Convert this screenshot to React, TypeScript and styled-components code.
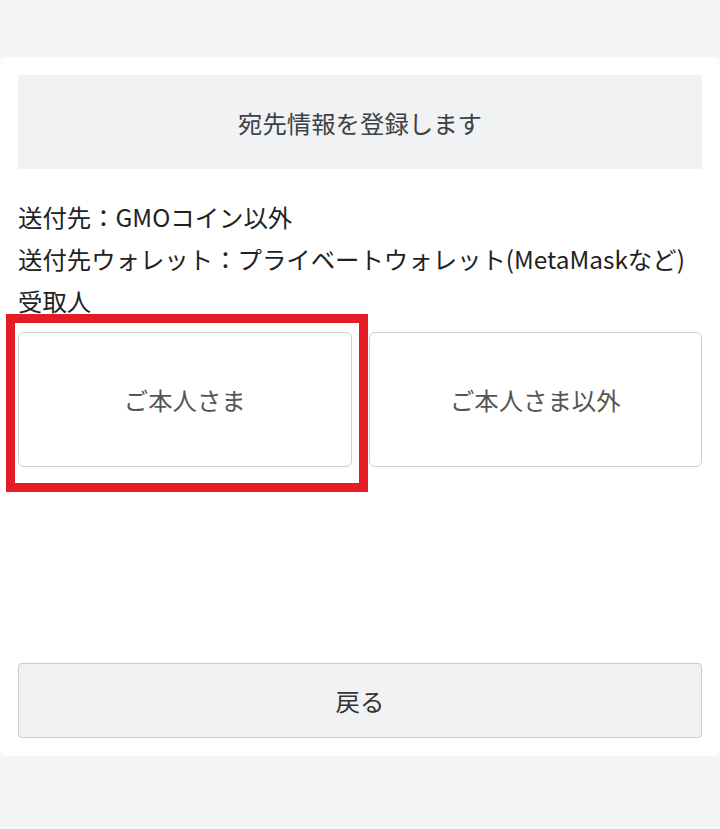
import styled, { createGlobalStyle } from 'styled-components';

const GlobalStyle = createGlobalStyle`
  html, body {
    margin: 0;
    padding: 0;
    background: #f5f5f5;
  }
  body {
    font-family: 'Noto Sans CJK JP', 'Noto Sans', sans-serif;
    color: #222;
  }
`;

const Page = styled.div`
  padding-top: 57px;
  min-height: 829px;
  box-sizing: border-box;
`;

const Card = styled.div`
  background: #ffffff;
  border-radius: 6px;
  padding: 18px 18px 18px;
  display: flex;
  flex-direction: column;
`;

const Header = styled.div`
  height: 94px;
  background: #f1f2f3;
  display: flex;
  align-items: center;
  justify-content: center;
  font-size: 24.4px;
  color: #3c4146;
`;

const InfoList = styled.div`
  margin-top: 27px;
  font-size: 24.4px;
  line-height: 42px;
  color: #222;
`;

const InfoLine = styled.div`
  white-space: nowrap;
`;

const ChoiceRow = styled.div`
  margin-top: 10px;
  display: grid;
  grid-template-columns: 1fr 1fr;
  gap: 17px;
`;

const ChoiceCell = styled.div`
  position: relative;
`;

const ChoiceButton = styled.button`
  width: 100%;
  height: 135px;
  background: #ffffff;
  border: 1px solid #cfcfcf;
  border-radius: 6px;
  font-family: inherit;
  font-size: 24.4px;
  color: #555;
  cursor: pointer;
  display: flex;
  align-items: center;
  justify-content: center;
`;

const Highlight = styled.div`
  position: absolute;
  left: -12px;
  top: -18px;
  width: 362px;
  height: 178px;
  box-sizing: border-box;
  border: 9px solid #e31c25;
  pointer-events: none;
`;

const BackButton = styled.button`
  margin-top: 196px;
  height: 75px;
  background: #f2f2f2;
  border: 1px solid #cccccc;
  border-radius: 4px;
  font-family: inherit;
  font-size: 24.4px;
  color: #333;
  cursor: pointer;
`;

const choices = ['ご本人さま', 'ご本人さま以外'];

export default function App() {
  return (
    <Page>
      <GlobalStyle />
      <Card>
        <Header>宛先情報を登録します</Header>
        <InfoList>
          <InfoLine>送付先：GMOコイン以外</InfoLine>
          <InfoLine>送付先ウォレット：プライベートウォレット(MetaMaskなど)</InfoLine>
          <InfoLine>受取人</InfoLine>
        </InfoList>
        <ChoiceRow>
          {choices.map((label, i) => (
            <ChoiceCell key={label}>
              <ChoiceButton>{label}</ChoiceButton>
              {i === 0 && <Highlight />}
            </ChoiceCell>
          ))}
        </ChoiceRow>
        <BackButton>戻る</BackButton>
      </Card>
    </Page>
  );
}
